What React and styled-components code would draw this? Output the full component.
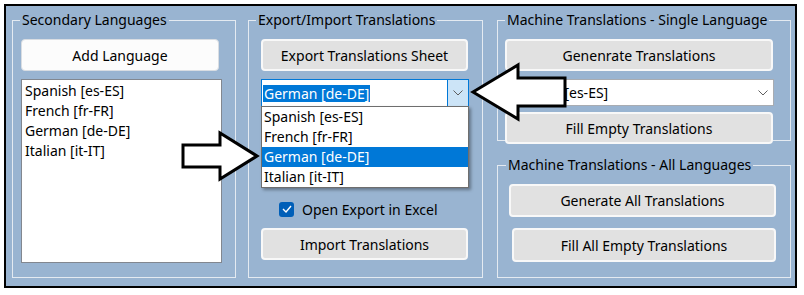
import React from 'react';
import styled, { createGlobalStyle } from 'styled-components';

const Global = createGlobalStyle`
  html, body { margin: 0; padding: 0; background: #fff; }
  body { font-family: "Noto Sans", "Open Sans", sans-serif; font-size: 14px; color: #000; }
  * { box-sizing: border-box; }
`;

const Frame = styled.div`
  position: relative;
  margin: 4px 0 0 4px;
  width: 793px;
  height: 284px;
  border: 2px solid #000;
  background: #99b4d1;
  padding: 4px 3px 8px 6px;
  display: flex;
  gap: 12px;
`;

const Column = styled.div`
  width: ${p => p.$w}px;
  margin-left: ${p => p.$ml || 0}px;
  display: flex;
  flex-direction: column;
  gap: 14px;
`;

const Group = styled.fieldset`
  margin: 0;
  padding: 0;
  min-width: 0;
  height: ${p => (p.$h ? `${p.$h}px` : '100%')};
  border: 1px solid #e4eaf1;
`;

const Title = styled.legend`
  margin-left: ${p => p.$ml || 7}px;
  padding: 0 2px;
  font-size: 14px;
  line-height: 20px;
  color: #000;
`;

const Content = styled.div`
  padding: 9px 0 0 ${p => p.$pl}px;
  display: flex;
  flex-direction: column;
  align-items: flex-start;
`;

const Button = styled.div`
  width: ${p => p.$w}px;
  height: ${p => p.$h || 32}px;
  margin-top: ${p => p.$mt || 0}px;
  margin-left: ${p => p.$ml || 0}px;
  margin-bottom: ${p => p.$mb || 0}px;
  position: relative;
  display: flex;
  align-items: center;
  justify-content: center;
  border-radius: 4px;
  background: ${p => (p.$light ? '#fcfcfc' : '#e1e1e1')};
  border: ${p => (p.$light ? '1px solid #d9dde2' : '2px solid #f8f8f8')};
  font-size: 14px;
  color: #000;
  white-space: nowrap;
`;

const ListBox = styled.div`
  width: ${p => p.$w}px;
  height: ${p => p.$h}px;
  margin-top: 8px;
  background: #fff;
  border: 1px solid #82878f;
  padding: 1px 0 0 3px;
`;

const Item = styled.div`
  height: 20px;
  line-height: 20px;
  padding-left: ${p => p.$pl || 0}px;
  white-space: nowrap;
  background: ${p => (p.$sel ? '#0078d7' : 'transparent')};
  color: ${p => (p.$sel ? '#fff' : '#000')};
`;

const ComboWrap = styled.div`
  position: relative;
  width: ${p => p.$w}px;
  height: ${p => p.$h}px;
  margin-top: 8px;
  display: flex;
  align-items: center;
  background: #fff;
  border: 1px solid ${p => (p.$focus ? '#0078d7' : '#a8acb2')};
`;

const ComboText = styled.div`
  flex: 1;
  padding-left: ${p => p.$pl}px;
  line-height: 17px;
  white-space: nowrap;
  overflow: hidden;
`;

const Selected = styled.span`
  display: inline-block;
  background: #0078d7;
  color: #fff;
  padding: 0 1px;
  line-height: 17px;
`;

const DropBtn = styled.div`
  width: 21px;
  align-self: stretch;
  display: flex;
  align-items: center;
  justify-content: center;
  background: ${p => (p.$focus ? '#cce4f7' : 'transparent')};
  border-left: 1px solid ${p => (p.$focus ? '#0078d7' : 'transparent')};
`;

const DropList = styled.div`
  position: absolute;
  top: 100%;
  left: -1px;
  width: ${p => p.$w}px;
  background: #fff;
  border: 1px solid #6e6e6e;
  box-shadow: 2px 2px 3px rgba(0, 0, 0, 0.35);
  z-index: 2;
`;

const CheckRow = styled.div`
  display: flex;
  align-items: center;
  gap: 8px;
  height: 20px;
  margin-top: 92px;
  margin-left: 18px;
  white-space: nowrap;
`;

const CheckBox = styled.div`
  width: 15px;
  height: 15px;
  border-radius: 3px;
  background: #005fb8;
  display: flex;
  align-items: center;
  justify-content: center;
`;

const Overlay = styled.svg`
  position: absolute;
  top: -2px;
  left: -2px;
  width: 793px;
  height: 284px;
  pointer-events: none;
  z-index: 5;
`;

const Chevron = () => (
  <svg width="10" height="6" viewBox="0 0 10 6">
    <polyline points="0.5,0.5 5,5 9.5,0.5" fill="none" stroke="#5f5f5f" strokeWidth="1" />
  </svg>
);

const langs = ['Spanish [es-ES]', 'French [fr-FR]', 'German [de-DE]', 'Italian [it-IT]'];

export default function App() {
  return (
    <>
      <Global />
      <Frame>
        <Column $w={224}>
          <Group>
            <Title>Secondary Languages</Title>
            <Content $pl={8}>
              <Button $w={198} $light>Add Language</Button>
              <ListBox $w={201} $h={184}>
                {langs.map(l => <Item key={l}>{l}</Item>)}
              </ListBox>
            </Content>
          </Group>
        </Column>

        <Column $w={235}>
          <Group>
            <Title>Export/Import Translations</Title>
            <Content $pl={12}>
              <Button $w={207}>Export Translations Sheet</Button>
              <ComboWrap $w={208} $h={28} $focus>
                <ComboText $pl={1}><Selected>German [de-DE]</Selected></ComboText>
                <DropBtn $focus><Chevron /></DropBtn>
                <DropList $w={208}>
                  {langs.map(l => (
                    <Item key={l} $pl={2} $sel={l.startsWith('German')}>{l}</Item>
                  ))}
                </DropList>
              </ComboWrap>
              <CheckRow>
                <CheckBox>
                  <svg width="10" height="8" viewBox="0 0 10 8">
                    <polyline points="1,4 4,7 9,1" fill="none" stroke="#fff" strokeWidth="1.4" />
                  </svg>
                </CheckBox>
                <span>Open Export in Excel</span>
              </CheckRow>
              <Button $w={207} $mt={9}>Import Translations</Button>
            </Content>
          </Group>
        </Column>

        <Column $w={294} $ml={2}>
          <Group $h={131}>
            <Title>Machine Translations - Single Language</Title>
            <Content $pl={7}>
              <Button $w={268}>Genenrate Translations</Button>
              <ComboWrap $w={269} $h={27}>
                <ComboText $pl={3}>Spanish [es-ES]</ComboText>
                <DropBtn><Chevron /></DropBtn>
              </ComboWrap>
              <Button $w={268} $mt={6} $mb={-4}>Fill Empty Translations</Button>
            </Content>
          </Group>
          <Group $h={123}>
            <Title $ml={8}>Machine Translations - All Languages</Title>
            <Content $pl={11}>
              <Button $w={267} $h={33}>Generate All Translations</Button>
              <Button $w={264} $h={34} $ml={3} $mt={11}>Fill All Empty Translations</Button>
            </Content>
          </Group>
        </Column>

        <Overlay viewBox="4 4 793 284">
          <polygon
            points="183,145 220,145 220,133 257,156 220,179 220,167 183,167"
            fill="#fff" stroke="#000" strokeWidth="3" strokeLinejoin="miter"
          />
          <polygon
            points="473,92 518,65 518,78 565,78 565,106 518,106 518,119"
            fill="#fff" stroke="#000" strokeWidth="3" strokeLinejoin="miter"
          />
        </Overlay>
      </Frame>
    </>
  );
}
